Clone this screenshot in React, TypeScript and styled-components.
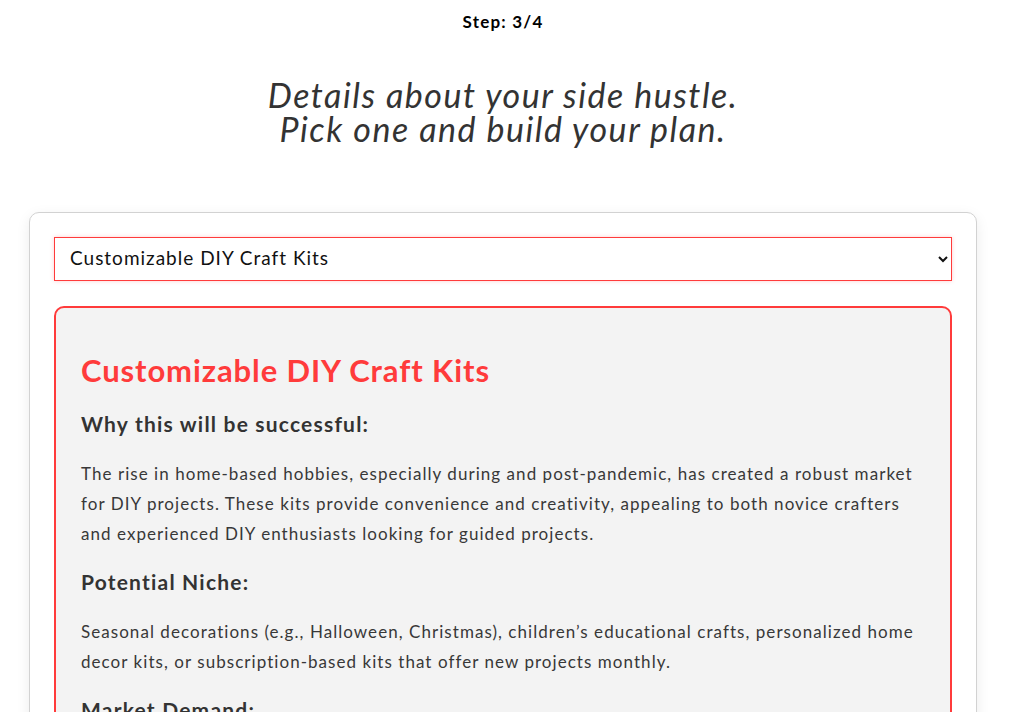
import React, { useState } from 'react';
import styled, { createGlobalStyle } from 'styled-components';

const GlobalStyle = createGlobalStyle`
  html, body {
    margin: 0;
    padding: 0;
    background: #ffffff;
    font-family: Lato, "Liberation Sans", sans-serif;
  }
`;

const Page = styled.div`
  padding: 0 11px 0 0;
  min-height: 100vh;
  box-sizing: border-box;
`;

const Step = styled.div`
  text-align: center;
  font-size: 17px;
  font-weight: 700;
  color: #000;
  padding-top: 12px;
  line-height: 20px;
  letter-spacing: 1.2px;
`;

const Heading = styled.h1`
  margin: 46px 0 0;
  text-align: center;
  font-size: 34px;
  font-style: italic;
  font-weight: 400;
  line-height: 34px;
  color: #333;
  letter-spacing: 1.5px;
`;

const Card = styled.div`
  max-width: 948px;
  margin: 66px auto 0;
  box-sizing: border-box;
  padding: 24px;
  border: 1px solid #d2d2d2;
  border-radius: 10px;
  background: #fff;
  box-shadow: 0 4px 14px rgba(0, 0, 0, 0.08);
`;

const Select = styled.select`
  display: block;
  width: 100%;
  height: 44px;
  padding: 0 10px 3px 11px;
  border: 1px solid #ff3b3b;
  border-radius: 0;
  background: #fff;
  font-family: Lato, "Liberation Sans", sans-serif;
  font-size: 19px;
  letter-spacing: 1px;
  color: #111;
  box-shadow: 0 0 4px rgba(255, 59, 59, 0.25);
  outline: none;
`;

const IdeaBox = styled.div`
  margin-top: 25px;
  padding: 26px 25px 40px;
  border: 2px solid #ff3b3b;
  border-radius: 10px;
  background: #f3f3f3;
`;

const IdeaTitle = styled.h2`
  margin: 18px 0 0;
  padding-bottom: 3px;
  font-size: 31px;
  font-weight: 700;
  line-height: 36px;
  letter-spacing: 0.9px;
  color: #ff3b3b;
`;

const SectionTitle = styled.h3`
  margin: 19px 0 0;
  font-size: 21px;
  font-weight: 700;
  line-height: 28px;
  letter-spacing: 1.2px;
  color: #333;
`;

const Paragraph = styled.p`
  margin: 21px 0 0;
  font-size: 17px;
  line-height: 30px;
  color: #383838;
  letter-spacing: 1.05px;
`;

const ideas = [
  {
    name: 'Customizable DIY Craft Kits',
    sections: [
      {
        title: 'Why this will be successful:',
        text: 'The rise in home-based hobbies, especially during and post-pandemic, has created a robust market for DIY projects. These kits provide convenience and creativity, appealing to both novice crafters and experienced DIY enthusiasts looking for guided projects.',
      },
      {
        title: 'Potential Niche:',
        text: 'Seasonal decorations (e.g., Halloween, Christmas), children\u2019s educational crafts, personalized home decor kits, or subscription-based kits that offer new projects monthly.',
      },
      {
        title: 'Market Demand:',
        text: 'The craft and hobby market continues to grow, with consumers looking for unique, hands-on experiences they can enjoy at home.',
      },
    ],
  },
];

const App: React.FC = () => {
  const [selected, setSelected] = useState(0);
  const idea = ideas[selected];

  return (
    <Page>
      <GlobalStyle />
      <Step>Step: 3/4</Step>
      <Heading>
        Details about your side hustle.
        <br />
        Pick one and build your plan.
      </Heading>
      <Card>
        <Select value={selected} onChange={(e) => setSelected(Number(e.target.value))}>
          {ideas.map((item, index) => (
            <option key={index} value={index}>
              {item.name}
            </option>
          ))}
        </Select>
        <IdeaBox>
          <IdeaTitle>{idea.name}</IdeaTitle>
          {idea.sections.map((section) => (
            <React.Fragment key={section.title}>
              <SectionTitle>{section.title}</SectionTitle>
              <Paragraph>{section.text}</Paragraph>
            </React.Fragment>
          ))}
        </IdeaBox>
      </Card>
    </Page>
  );
};

export default App;
